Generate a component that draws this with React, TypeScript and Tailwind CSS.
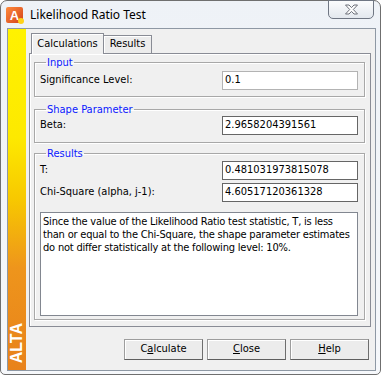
import React from 'react';

const ui = { fontFamily: '"DejaVu Sans Condensed", "Liberation Sans", Arial, sans-serif' };

function Field({ value, dim }: { value: string; dim?: boolean }) {
  return (
    <div
      className={`w-[136px] h-[19px] bg-white border flex items-center pl-[2px] text-[11px] text-black ${dim ? 'border-[#b3b3b3]' : 'border-[#666666]'}`}
    >
      {value}
    </div>
  );
}

function Group({ title, className, children }: { title: string; className: string; children: React.ReactNode }) {
  return (
    <fieldset className={`border border-[#a8a8a8] shadow-[inset_1px_1px_0_#ffffff,1px_1px_0_#ffffff] pl-[5px] pr-[6px] ${className}`}>
      <legend className="ml-[6px] px-[1px] text-[11px] leading-[13px] text-[#0a18ff]">{title}</legend>
      {children}
    </fieldset>
  );
}

function Button({ pre, acc, post }: { pre: string; acc: string; post: string }) {
  return (
    <button className="w-[79px] h-[21px] border border-[#9d9d9d] border-b-[#5e5e5e] border-r-[#6e6e6e] bg-[#ececec] shadow-[inset_1px_1px_0_#ffffff] text-[11px] text-black flex items-center justify-center">
      {pre}
      <span className="underline">{acc}</span>
      {post}
    </button>
  );
}

export default function App() {
  return (
    <div className="w-[382px] h-[376px] bg-white" style={ui}>
      <div className="w-[381px] h-[375px] rounded-t-[7px] rounded-b-[5px] border border-[#6f6f6f] bg-gradient-to-b from-[#eef2f7] to-[#f6f8fb] flex flex-col">
        {/* title bar */}
        <div className="h-[27px] flex items-start relative">
          <div className="mt-[6px] ml-[5px] w-[17px] h-[16px] rounded-[2px] bg-gradient-to-br from-[#ff8a3c] to-[#d2401a] flex items-center justify-center relative">
            <span className="text-white font-bold text-[13px] leading-none" style={{ fontFamily: '"Liberation Sans", Arial, sans-serif' }}>A</span>
            <span className="absolute right-[-1px] bottom-[-1px] w-[6px] h-[6px] rounded-full bg-[#ffd21a]" />
          </div>
          <div className="ml-[7px] mt-[5px] text-[12px] text-black" style={{ fontFamily: '"Noto Sans", "Open Sans", sans-serif' }}>
            Likelihood Ratio Test
          </div>
          <div className="ml-auto mr-[6px] mt-[-1px] w-[46px] h-[19px] border border-[#6f7683] rounded-b-[5px] bg-gradient-to-b from-[#fbfcfd] to-[#e3e8ee] flex items-center justify-center">
            <svg width="15" height="11" viewBox="0 0 15 11">
              <path
                d="M1.5 1 H5 L7.5 3.6 L10 1 H13.5 L9.3 5.5 L13.5 10 H10 L7.5 7.4 L5 10 H1.5 L5.7 5.5 Z"
                fill="#ffffff"
                stroke="#6b6f78"
                strokeWidth="1"
              />
            </svg>
          </div>
        </div>

        {/* client area */}
        <div className="flex-1 ml-[6px] mr-[4px] mb-[3px] border border-[#8e98a4] flex">
          <div className="w-[18px] bg-[linear-gradient(to_bottom,#fff200_0%,#fde900_32%,#f7c800_50%,#ee951c_70%,#e8821b_100%)] flex flex-col justify-end items-center pb-[7px]">
            <span
              className="text-white font-bold text-[16px] leading-none [writing-mode:vertical-rl] rotate-180"
              style={{ fontFamily: '"Liberation Sans", Arial, sans-serif' }}
            >
              ALTA
            </span>
          </div>

          <div className="flex-1 bg-[#f0f0f0] flex flex-col pt-[4px] pl-[3px] pr-[4px] text-[11px] text-black">
            {/* tabs */}
            <div className="h-[20px] flex items-end pl-[2px] relative z-10">
              <div className="w-[73px] h-[21px] mb-[-1px] border border-[#898c95] border-b-0 bg-[#f0f0f0] shadow-[inset_1px_1px_0_#ffffff] flex items-center justify-center">
                Calculations
              </div>
              <div className="w-[48px] h-[18px] border border-[#898c95] border-b-0 border-l-0 bg-[#ececec] shadow-[inset_1px_1px_0_#ffffff] flex items-center justify-center">
                Results
              </div>
            </div>

            {/* tab panel */}
            <div className="h-[274px] border border-[#898c95] shadow-[inset_1px_1px_0_#ffffff] pl-[4px] pr-[5px] pt-[2px] flex flex-col">
              <Group title="Input" className="h-[41px]">
                <div className="flex items-center justify-between mt-[2px]">
                  <span>Significance Level:</span>
                  <Field value="0.1" dim />
                </div>
              </Group>

              <Group title="Shape Parameter" className="h-[40px] mt-[6px]">
                <div className="flex items-center justify-between">
                  <span>Beta:</span>
                  <Field value="2.9658204391561" />
                </div>
              </Group>

              <Group title="Results" className="h-[173px] mt-[4px]">
                <div className="flex items-center justify-between mt-[1px]">
                  <span>T:</span>
                  <Field value="0.481031973815078" />
                </div>
                <div className="flex items-center justify-between mt-[3px]">
                  <span>Chi-Square (alpha, j-1):</span>
                  <Field value="4.60517120361328" />
                </div>
                <div className="mt-[10px] h-[104px] bg-white border border-[#828790] px-[2px] pt-[2px] leading-[13px] tracking-[-0.2px]">
                  Since the value of the Likelihood Ratio test statistic, T, is less than or equal to the Chi-Square, the shape parameter estimates do not differ statistically at the following level: 10%.
                </div>
              </Group>
            </div>

            {/* buttons */}
            <div className="mt-[12px] flex justify-end gap-[4px] pr-[2px]">
              <Button pre="C" acc="a" post="lculate" />
              <Button pre="" acc="C" post="lose" />
              <Button pre="" acc="H" post="elp" />
            </div>
          </div>
        </div>
      </div>
    </div>
  );
}
